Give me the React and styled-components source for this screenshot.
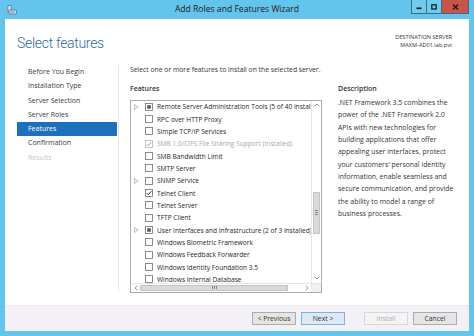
import React from 'react';
import styled, { createGlobalStyle } from 'styled-components';

const Global = createGlobalStyle`
  html, body { margin: 0; padding: 0; background: #ffffff; }
  body { font-family: "Open Sans", "Noto Sans", sans-serif; color: #262626; }
`;

const features = [
  { name: 'Remote Server Administration Tools (5 of 40 installed)', state: 'partial', expand: true },
  { name: 'RPC over HTTP Proxy', state: 'off' },
  { name: 'Simple TCP/IP Services', state: 'off' },
  { name: 'SMB 1.0/CIFS File Sharing Support (Installed)', state: 'installed' },
  { name: 'SMB Bandwidth Limit', state: 'off' },
  { name: 'SMTP Server', state: 'off' },
  { name: 'SNMP Service', state: 'off', expand: true },
  { name: 'Telnet Client', state: 'on' },
  { name: 'Telnet Server', state: 'off' },
  { name: 'TFTP Client', state: 'off' },
  { name: 'User Interfaces and Infrastructure (2 of 3 installed)', state: 'partial', expand: true },
  { name: 'Windows Biometric Framework', state: 'off' },
  { name: 'Windows Feedback Forwarder', state: 'off' },
  { name: 'Windows Identity Foundation 3.5', state: 'off' },
  { name: 'Windows Internal Database', state: 'off' },
];

const steps = ['Before You Begin', 'Installation Type', 'Server Selection', 'Server Roles', 'Features', 'Confirmation', 'Results'];

const description = [
  '.NET Framework 3.5 combines the',
  'power of the .NET Framework 2.0',
  'APIs with new technologies for',
  'building applications that offer',
  'appealing user interfaces, protect',
  "your customers' personal identity",
  'information, enable seamless and',
  'secure communication, and provide',
  'the ability to model a range of',
  'business processes.',
];

function Checkbox({ state }) {
  const stroke = state === 'installed' ? '#b5b5b5' : '#6e6e6e';
  return (
    <CheckIcon width="8" height="8" viewBox="0 0 8 8">
      <rect x="0.5" y="0.5" width="7" height="7" fill="#fff" stroke={stroke} strokeWidth="0.8" />
      {state === 'partial' && <rect x="2.2" y="2.2" width="3.6" height="3.6" fill="#5a5a5a" />}
      {(state === 'on' || state === 'installed') && (
        <path d="M1.8 4.2 L3.3 5.7 L6.3 2.2" fill="none" stroke={state === 'on' ? '#222' : '#9a9a9a'} strokeWidth="1" />
      )}
    </CheckIcon>
  );
}

function App() {
  return (
    <>
      <Global />
      <Window>
        <TitleBar>
          <AppIcon>
            <svg width="10" height="10" viewBox="0 0 10 10">
              <rect x="1" y="0.5" width="3" height="6" fill="#e8eef4" stroke="#4d6b86" strokeWidth="0.7" />
              <rect x="2" y="5" width="7.5" height="4" rx="0.5" fill="#cfd8e0" stroke="#4d6b86" strokeWidth="0.7" />
              <line x1="3" y1="7" x2="8" y2="7" stroke="#4d6b86" strokeWidth="0.6" />
            </svg>
          </AppIcon>
          <TitleText>Add Roles and Features Wizard</TitleText>
          <WinControls>
            <WinButton>
              <svg width="6" height="6" viewBox="0 0 6 6"><rect x="0.5" y="3.5" width="5" height="1.6" fill="#111" /></svg>
            </WinButton>
            <WinButton>
              <svg width="6" height="6" viewBox="0 0 6 6"><rect x="0.8" y="0.8" width="4.4" height="4.2" fill="none" stroke="#111" strokeWidth="1.2" /></svg>
            </WinButton>
            <WinButton $close>
              <svg width="7" height="6" viewBox="0 0 7 6"><path d="M1 0.6 L6 5.4 M6 0.6 L1 5.4" stroke="#2a1010" strokeWidth="1.4" /></svg>
            </WinButton>
          </WinControls>
        </TitleBar>
        <Body>
          <Header>
            <Heading>Select features</Heading>
            <Dest>
              <span>DESTINATION SERVER</span>
              <span>MAXM-AD01.lab.pvt</span>
            </Dest>
          </Header>
          <Content>
            <Nav>
              {steps.map((s) => (
                <NavItem key={s} $active={s === 'Features'} $disabled={s === 'Results'}>{s}</NavItem>
              ))}
            </Nav>
            <Main>
              <Intro>Select one or more features to install on the selected server.</Intro>
              <Columns>
                <ListColumn>
                  <Label>Features</Label>
                  <ListBox>
                    <Rows>
                      {features.map((f) => (
                        <Row key={f.name}>
                          <Expander>
                            {f.expand && (
                              <svg width="5" height="6" viewBox="0 0 5 6"><path d="M0.6 0.6 L4.2 3 L0.6 5.4 Z" fill="none" stroke="#a0a0a0" strokeWidth="0.7" /></svg>
                            )}
                          </Expander>
                          <Checkbox state={f.state} />
                          <RowText $muted={f.state === 'installed'}>{f.name}</RowText>
                        </Row>
                      ))}
                    </Rows>
                    <VScroll>
                      <ArrowCell>
                        <svg width="6" height="4" viewBox="0 0 6 4"><path d="M0.6 3.4 L3 1 L5.4 3.4" fill="none" stroke="#777" strokeWidth="0.8" /></svg>
                      </ArrowCell>
                      <Track>
                        <VThumb $offset={82}>
                          <Grip $vertical />
                        </VThumb>
                      </Track>
                      <ArrowCell>
                        <svg width="6" height="4" viewBox="0 0 6 4"><path d="M0.6 0.6 L3 3 L5.4 0.6" fill="none" stroke="#777" strokeWidth="0.8" /></svg>
                      </ArrowCell>
                    </VScroll>
                    <HScroll>
                      <ArrowCell $wide>
                        <svg width="4" height="6" viewBox="0 0 4 6"><path d="M3.4 0.6 L1 3 L3.4 5.4" fill="none" stroke="#777" strokeWidth="0.8" /></svg>
                      </ArrowCell>
                      <HThumb><Grip /></HThumb>
                      <HSpacer />
                      <ArrowCell $wide>
                        <svg width="4" height="6" viewBox="0 0 4 6"><path d="M0.6 0.6 L3 3 L0.6 5.4" fill="none" stroke="#777" strokeWidth="0.8" /></svg>
                      </ArrowCell>
                    </HScroll>
                    <Corner />
                  </ListBox>
                </ListColumn>
                <DescColumn>
                  <Label>Description</Label>
                  <DescText>
                    {description.map((l) => <span key={l}>{l}</span>)}
                  </DescText>
                </DescColumn>
              </Columns>
            </Main>
          </Content>
          <Footer>
            <Button>&lt; Previous</Button>
            <Button $variant="default">Next &gt;</Button>
            <Button $variant="disabled" style={{ marginLeft: 14 }}>Install</Button>
            <Button>Cancel</Button>
          </Footer>
        </Body>
      </Window>
    </>
  );
}

export default App;

const Window = styled.div`
  width: 474px;
  height: 336px;
  box-sizing: border-box;
  background: #63c5ec;
  padding: 0 5px 5px 5px;
  display: flex;
  flex-direction: column;
`;

const TitleBar = styled.div`
  height: 19px;
  display: flex;
  align-items: flex-start;
`;

const AppIcon = styled.div`
  width: 12px;
  height: 19px;
  display: flex;
  align-items: center;
  padding-left: 2px;
`;

const TitleText = styled.div`
  flex: 1;
  text-align: center;
  font-size: 8.6px;
  line-height: 19px;
  color: #1b1b1b;
  padding-left: 44px;
`;

const WinControls = styled.div`
  display: flex;
  height: 13px;
  border: 1px solid #3b6b86;
  border-top: none;
`;

const WinButton = styled.div`
  width: ${(p) => (p.$close ? '26px' : '14px')};
  height: 13px;
  display: flex;
  align-items: center;
  justify-content: center;
  background: ${(p) => (p.$close ? '#c8554a' : '#6fcbee')};
  & + & { border-left: 1px solid #3b6b86; }
`;

const Body = styled.div`
  flex: 1;
  background: #ffffff;
  display: flex;
  flex-direction: column;
  min-height: 0;
`;

const Header = styled.div`
  height: 45px;
  box-sizing: border-box;
  display: flex;
  justify-content: space-between;
  align-items: flex-start;
  padding: 0 17px 0 12px;
`;

const Heading = styled.h1`
  margin: 14px 0 0 0;
  font-family: Roboto, "Open Sans", sans-serif;
  font-size: 14px;
  font-weight: 300;
  letter-spacing: -0.3px;
  line-height: 20px;
  color: #2f6ba3;
`;

const Dest = styled.div`
  margin-top: 14px;
  display: flex;
  flex-direction: column;
  align-items: flex-end;
  font-size: 5.6px;
  line-height: 8px;
  color: #333;
`;

const Content = styled.div`
  flex: 1;
  display: flex;
  min-height: 0;
  padding-top: 1px;
`;

const Nav = styled.div`
  width: 114px;
  box-sizing: border-box;
  padding-left: 12px;
  border-right: 1px solid #e4e4e4;
  margin-bottom: 14px;
  display: flex;
  flex-direction: column;
`;

const NavItem = styled.div`
  height: 14.3px;
  line-height: 14.3px;
  font-size: 7px;
  padding-left: 11px;
  margin-right: 1px;
  background: ${(p) => (p.$active ? '#1e70bd' : 'transparent')};
  color: ${(p) => (p.$active ? '#ffffff' : p.$disabled ? '#c4c4c4' : '#3a3a3a')};
`;

const Main = styled.div`
  flex: 1;
  padding-left: 11px;
  display: flex;
  flex-direction: column;
`;

const Intro = styled.div`
  font-size: 6.8px;
  line-height: 10px;
  color: #333;
`;

const Columns = styled.div`
  display: flex;
  gap: 16px;
  margin-top: 9px;
`;

const ListColumn = styled.div`
  width: 192px;
  display: flex;
  flex-direction: column;
`;

const Label = styled.div`
  font-size: 7px;
  font-weight: 600;
  line-height: 10px;
  color: #333;
`;

const ListBox = styled.div`
  margin-top: 5.5px;
  height: 193px;
  box-sizing: border-box;
  border: 1px solid #acacac;
  display: grid;
  grid-template-columns: 1fr 10px;
  grid-template-rows: 1fr 9px;
`;

const Rows = styled.div`
  overflow: hidden;
  min-width: 0;
`;

const Row = styled.div`
  height: 12.35px;
  display: flex;
  align-items: center;
  white-space: nowrap;
`;

const Expander = styled.div`
  width: 14px;
  flex-shrink: 0;
  display: flex;
  align-items: center;
  padding-left: 3px;
  box-sizing: border-box;
`;

const CheckIcon = styled.svg`
  flex-shrink: 0;
`;

const RowText = styled.span`
  margin-left: 4px;
  font-size: 6.6px;
  color: ${(p) => (p.$muted ? '#a8a8a8' : '#262626')};
`;

const VScroll = styled.div`
  border-left: 1px solid #e6e6e6;
  background: #f4f4f4;
  display: flex;
  flex-direction: column;
`;

const ArrowCell = styled.div`
  width: ${(p) => (p.$wide ? '9px' : 'auto')};
  height: ${(p) => (p.$wide ? 'auto' : '9px')};
  display: flex;
  align-items: center;
  justify-content: center;
  background: #fff;
`;

const Track = styled.div`
  flex: 1;
  background: #fff;
`;

const VThumb = styled.div`
  margin: ${(p) => p.$offset}px 1px 0 1px;
  height: 42px;
  background: #d9d9d9;
  border: 1px solid #c4c4c4;
  box-sizing: border-box;
  display: flex;
  align-items: center;
  justify-content: center;
`;

const Grip = styled.div`
  width: ${(p) => (p.$vertical ? '3px' : '5px')};
  height: ${(p) => (p.$vertical ? '5px' : '3px')};
  background: ${(p) =>
    p.$vertical
      ? 'repeating-linear-gradient(to bottom, #888 0 1px, transparent 1px 2px)'
      : 'repeating-linear-gradient(to right, #888 0 1px, transparent 1px 2px)'};
`;

const HScroll = styled.div`
  border-top: 1px solid #e6e6e6;
  display: flex;
  min-width: 0;
`;

const HThumb = styled.div`
  width: 148px;
  margin: 1px 0;
  background: #d9d9d9;
  border: 1px solid #c4c4c4;
  box-sizing: border-box;
  display: flex;
  align-items: center;
  justify-content: center;
`;

const HSpacer = styled.div`
  flex: 1;
`;

const Corner = styled.div`
  background: #f0f0f0;
  border-top: 1px solid #e6e6e6;
  border-left: 1px solid #e6e6e6;
`;

const DescColumn = styled.div`
  width: 120px;
  display: flex;
  flex-direction: column;
`;

const DescText = styled.div`
  margin-top: 3px;
  display: flex;
  flex-direction: column;
  font-size: 6.9px;
  line-height: 12.35px;
  color: #333;
  white-space: nowrap;
`;

const Footer = styled.div`
  height: 26px;
  background: #f3f1f6;
  border-top: 1px solid #ebe9ef;
  box-sizing: border-box;
  display: flex;
  align-items: center;
  justify-content: flex-end;
  gap: 5px;
  padding-right: 12px;
`;

const Button = styled.div`
  width: 44px;
  height: 13px;
  box-sizing: border-box;
  display: flex;
  align-items: center;
  justify-content: center;
  font-size: 6.8px;
  border: 1px solid ${(p) => (p.$variant === 'default' ? '#7fb2e0' : p.$variant === 'disabled' ? '#d8d8d8' : '#acacac')};
  background: ${(p) => (p.$variant === 'default' ? '#dce9f5' : p.$variant === 'disabled' ? '#f4f4f4' : '#e5e5e5')};
  color: ${(p) => (p.$variant === 'disabled' ? '#b0b0b0' : '#333')};
`;
